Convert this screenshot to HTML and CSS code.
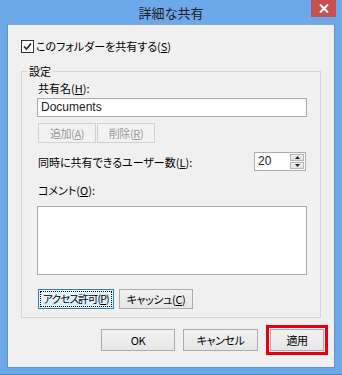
FILE: index.html
```html
<!DOCTYPE html>
<html lang="ja">
<head>
    <meta charset="UTF-8">
    <title>詳細な共有</title>
    <link rel="stylesheet" href="styles.css">
</head>
<body>
    <div class="window">
        <div class="titlebar">
            <span class="title">詳細な共有</span>
            <span class="close">
                <svg width="10" height="9" viewBox="0 0 10 9"><path d="M1 0.5 L9 8.5 M9 0.5 L1 8.5" stroke="#fff" stroke-width="2"/></svg>
            </span>
        </div>
        <div class="client">
            <label class="check-row">
                <span class="checkbox">
                    <svg width="11" height="11" viewBox="0 0 11 11"><path d="M2 5.5 L4.5 8 L9 2.5" fill="none" stroke="#222" stroke-width="1.6"/></svg>
                </span>
                <span>このフォルダーを共有する(<u>S</u>)</span>
            </label>

            <fieldset class="group">
                <legend>設定</legend>
                <div class="label">共有名(<u>H</u>):</div>
                <div class="textbox">Documents</div>
                <div class="btn-row">
                    <span class="btn small disabled">追加(<u>A</u>)</span>
                    <span class="btn small disabled">削除(<u>R</u>)</span>
                </div>
                <div class="users-row">
                    <span>同時に共有できるユーザー数(<u>L</u>):</span>
                    <span class="spin">
                        <span class="spin-value">20</span>
                        <span class="spin-btns">
                            <span class="spin-btn"><svg width="5" height="3" viewBox="0 0 5 3"><path d="M0 3 L2.5 0 L5 3Z" fill="#222"/></svg></span>
                            <span class="spin-btn"><svg width="5" height="3" viewBox="0 0 5 3"><path d="M0 0 L2.5 3 L5 0Z" fill="#222"/></svg></span>
                        </span>
                    </span>
                </div>
                <div class="label comment-label">コメント(<u>O</u>):</div>
                <div class="textarea"></div>
                <div class="btn-row bottom-row">
                    <span class="btn focused"><span class="focus-rect">アクセス許可(<u>P</u>)</span></span>
                    <span class="btn">キャッシュ(<u>C</u>)</span>
                </div>
            </fieldset>

            <div class="dialog-buttons">
                <span class="btn dlg ok">OK</span>
                <span class="btn dlg cancel">キャンセル</span>
                <span class="highlight"><span class="btn dlg apply">適用</span></span>
            </div>
        </div>
    </div>
</body>
</html>
```

FILE: styles.css
```css
body {
    margin: 0;
    font-family: "Noto Sans CJK JP", "Noto Sans", sans-serif;
    font-size: 11px;
    font-feature-settings: "palt";
    color: #000;
    background: #6ca8ea;
}
u {
    text-decoration-thickness: 1px;
    text-underline-offset: 1px;
}
.window {
    width: 342px;
    height: 375px;
    background: #6ca8ea;
    box-sizing: border-box;
    border-bottom: 1px solid #4b86c9;
    display: flex;
    flex-direction: column;
}
.titlebar {
    height: 24px;
    position: relative;
    display: flex;
    justify-content: center;
    align-items: center;
}
.title {
    font-size: 13px;
    color: #1e1e1e;
    margin-top: 1px;
}
.close {
    position: absolute;
    right: 6px;
    top: 0;
    width: 25px;
    height: 17px;
    background: #c75050;
    display: flex;
    align-items: center;
    justify-content: center;
}
.client {
    margin: 0 7px;
    height: 344px;
    background: #f0f0f0;
    border: 1px solid #5d93d1;
    border-top-color: #7aa9dd;
    box-sizing: border-box;
    padding: 15px 0 0 13px;
}
.check-row {
    display: flex;
    align-items: center;
    gap: 2px;
    height: 13px;
    line-height: 13px;
}
.checkbox {
    width: 11px;
    height: 11px;
    border: 1px solid #333;
    background: #fff;
    display: flex;
}
.group {
    margin: 11px 0 0 0;
    width: 300px;
    height: 254px;
    box-sizing: border-box;
    border: 1px solid #d5d5d5;
    padding: 0 0 0 16px;
}
.group legend {
    padding: 0 2px;
    margin-left: -11px;
    line-height: 14px;
}
.label {
    line-height: 14px;
    margin-top: 3px;
}
.textbox {
    margin-top: 3px;
    width: 270px;
    height: 19px;
    box-sizing: border-box;
    border: 1px solid #abadb3;
    background: #fff;
    padding: 0 3px;
    line-height: 17px;
    font-family: "Liberation Sans", sans-serif;
    font-size: 12px;
    color: #222;
    margin-left: -1px;
}
.btn-row {
    display: flex;
    gap: 1px;
    margin-top: 6px;
}
.btn {
    display: flex;
    align-items: center;
    justify-content: center;
    height: 20px;
    box-sizing: border-box;
    border: 1px solid #acacac;
    background: linear-gradient(#f2f2f2, #e6e6e6);
    line-height: 14px;
    white-space: nowrap;
    letter-spacing: -0.4px;
}
.btn.small {
    width: 58px;
}
.btn.disabled {
    color: #9a9a9a;
    border-color: #d2d2d2;
    background: #f2f2f2;
}
.users-row {
    display: flex;
    justify-content: space-between;
    align-items: center;
    width: 268px;
    margin-top: 9px;
    height: 19px;
}
.spin {
    display: flex;
    width: 52px;
    height: 19px;
    box-sizing: border-box;
    border: 1px solid #abadb3;
    background: #fff;
}
.spin-value {
    flex: 1;
    padding-left: 3px;
    line-height: 17px;
    font-family: "Liberation Sans", sans-serif;
    font-size: 12px;
    color: #222;
}
.spin-btns {
    width: 14px;
    display: flex;
    flex-direction: column;
    gap: 1px;
    padding: 1px 1px 1px 0;
}
.spin-btn {
    flex: 1;
    background: linear-gradient(#f2f2f2, #e3e3e3);
    border: 1px solid #b8b8b8;
    display: flex;
    align-items: center;
    justify-content: center;
}
.comment-label {
    margin-top: 12px;
}
.textarea {
    margin-top: 9px;
    margin-left: -1px;
    width: 270px;
    height: 69px;
    box-sizing: border-box;
    border: 1px solid #abadb3;
    background: #fff;
}
.bottom-row {
    gap: 5px;
    margin-top: 14px;
}
.bottom-row .btn {
    width: 74px;
    height: 20px;
}
.bottom-row .btn.focused {
    width: 76px;
    border-color: #3c7fb1;
    background: linear-gradient(#eaf6fd, #d9f0fc);
    padding: 1px;
}
.focus-rect {
    display: flex;
    align-items: center;
    justify-content: center;
    width: 100%;
    height: 100%;
    border: 1px dotted #000;
    box-sizing: border-box;
    font-size: 10.5px;
    letter-spacing: -0.8px;
}
.dialog-buttons {
    display: flex;
    justify-content: flex-end;
    align-items: center;
    gap: 8px;
    width: 307px;
    margin-top: 7px;
}
.btn.dlg {
    height: 22px;
}
.btn.ok {
    width: 74px;
}
.btn.cancel {
    width: 75px;
}
.btn.apply {
    width: 54px;
}
.highlight {
    display: flex;
    border: 3px solid #e60012;
    padding: 1px;
}
```
